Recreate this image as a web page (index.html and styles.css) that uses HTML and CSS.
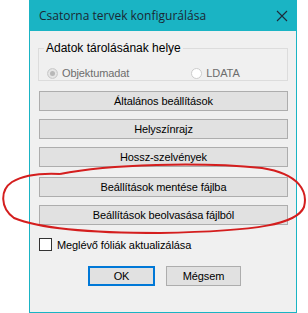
FILE: index.html
```html
<!DOCTYPE html>
<html>
<head>
<meta charset="utf-8">
<link rel="stylesheet" href="styles.css">
</head>
<body>
<div class="window">
  <div class="titlebar">
    <span class="title">Csatorna tervek konfigurálása</span>
    <svg class="close" width="12" height="12" viewBox="0 0 12 12"><path d="M1 1L11 11M11 1L1 11" stroke="#1d2b3a" stroke-width="1.1" fill="none"/></svg>
  </div>
  <div class="content">
    <fieldset class="group">
      <legend>Adatok tárolásának helye</legend>
      <div class="radios">
        <label class="radio"><span class="dot checked"></span>Objektumadat</label>
        <label class="radio r2"><span class="dot"></span>LDATA</label>
      </div>
    </fieldset>
    <div class="btn b1">Általános beállítások</div>
    <div class="btn">Helyszínrajz</div>
    <div class="btn">Hossz-szelvények</div>
    <div class="btn b4">Beállítások mentése fájlba</div>
    <div class="btn">Beállítások beolvasása fájlból</div>
    <label class="check"><span class="box"></span>Meglévő fóliák aktualizálása</label>
    <div class="actions">
      <div class="btn ok">OK</div>
      <div class="btn cancel">Mégsem</div>
    </div>
  </div>
</div>
<svg class="scribble" width="308" height="313" viewBox="0 0 308 313">
  <path d="M60 174 C 110 164, 200 162, 262 168 C 300 174, 308 192, 304 207 C 297 224, 260 231, 160 233 C 90 233, 40 229, 14 218 C 0 208, 0 190, 12 182 C 22 176, 40 173, 60 174" stroke="#d41e1e" stroke-width="2" fill="none"/>
</svg>
</body>
</html>
```
FILE: styles.css
```css
html, body {
  margin: 0;
  padding: 0;
  background: #ffffff;
}
body {
  position: relative;
  width: 308px;
  height: 313px;
  overflow: hidden;
  font-family: "Liberation Sans", Arial, sans-serif;
  font-size: 11px;
  color: #000;
}
.window {
  margin-left: 29px;
  width: 268px;
  height: 313px;
  box-sizing: border-box;
  border: 1px solid #1ab4c4;
  border-top: none;
  background: #f0f0f0;
}
.titlebar {
  height: 31px;
  margin: 0 -1px;
  background: #1ab4c4;
  display: flex;
  align-items: center;
  padding-left: 10px;
  padding-right: 9px;
  justify-content: space-between;
}
.title {
  font-family: "Open Sans", "Noto Sans", sans-serif;
  font-size: 12px;
  color: #1a2733;
}
.content {
  padding: 0 8px;
  display: flex;
  flex-direction: column;
}
.group {
  margin: 10px 0 0 0;
  padding: 0;
  border: 1px solid #dcdcdc;
  height: 38px;
  box-sizing: content-box;
}
.group legend {
  padding: 0 2px;
  margin-left: 5px;
  font-size: 12px;
}
.radios {
  display: flex;
  padding-left: 8px;
  padding-top: 12px;
}
.radio {
  display: flex;
  align-items: center;
  color: #6d6d6d;
  font-size: 11px;
  letter-spacing: -0.1px;
}
.r2 {
  margin-left: 62px;
}
.dot {
  width: 11px;
  height: 11px;
  box-sizing: border-box;
  border: 1px solid #cccccc;
  border-radius: 50%;
  background: #ffffff;
  margin-right: 4px;
  display: inline-block;
}
.dot.checked {
  background: #e6e6e6;
  box-shadow: inset 0 0 0 2px #e6e6e6, inset 0 0 0 5px #b8b8b8;
}
.btn {
  height: 20px;
  box-sizing: border-box;
  border: 1px solid #adadad;
  background: #e1e1e1;
  display: flex;
  align-items: center;
  justify-content: center;
  margin-left: 1px;
  margin-top: 8px;
  font-size: 11px;
  letter-spacing: -0.1px;
}
.b1 {
  margin-top: 10px;
}
.b4 {
  margin-top: 10px;
}
.check {
  display: flex;
  align-items: center;
  margin-top: 13px;
  margin-left: 1px;
  font-size: 11px;
  letter-spacing: -0.1px;
}
.box {
  width: 13px;
  height: 13px;
  box-sizing: border-box;
  border: 1px solid #333333;
  background: #ffffff;
  margin-right: 5px;
}
.actions {
  display: flex;
  margin-top: 15px;
  padding-left: 50px;
  gap: 11px;
}
.actions .btn {
  margin: 0;
}
.ok {
  width: 67px;
  border: 2px solid #0078d7;
}
.cancel {
  width: 75px;
}
.scribble {
  position: absolute;
  left: 0;
  top: 0;
  pointer-events: none;
}
```
